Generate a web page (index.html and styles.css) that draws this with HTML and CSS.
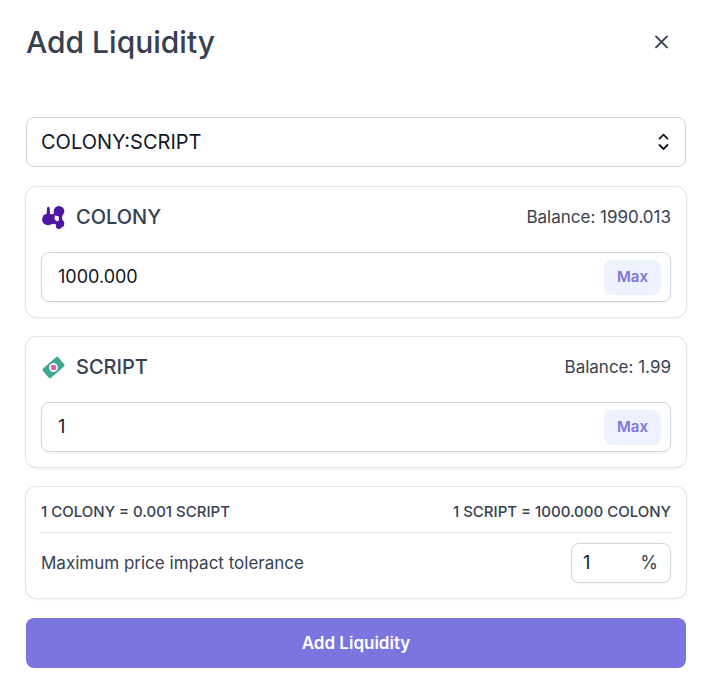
FILE: index.html
```html
<!DOCTYPE html>
<html lang="en">
<head>
    <meta charset="UTF-8">
    <meta name="viewport" content="width=device-width, initial-scale=1.0">
    <title>Add Liquidity</title>
    <link rel="stylesheet" href="styles.css">
</head>
<body>
    <form class="panel">
        <header class="panel-header">
            <h1>Add Liquidity</h1>
            <button type="button" class="close" aria-label="Close">
                <svg width="20" height="20" viewBox="0 0 20 20" fill="none" stroke="currentColor" stroke-width="1.9" stroke-linecap="round">
                    <path d="M5 4.4l11 11M16 4.4l-11 11"/>
                </svg>
            </button>
        </header>

        <div class="pair">
            <select aria-label="Token pair">
                <option>COLONY:SCRIPT</option>
            </select>
            <svg class="chevrons" width="24" height="24" viewBox="0 0 24 24" fill="none" stroke="currentColor" stroke-width="1.8" stroke-linecap="round" stroke-linejoin="round">
                <path d="M8.5 8.6l4-4 4 4M8.5 15l4 4 4-4"/>
            </svg>
        </div>

        <section class="card">
            <div class="card-header">
                <svg class="token-icon" width="25" height="25" viewBox="0 0 25 25">
                    <g fill="#4f16a0">
                        <circle cx="7" cy="14.4" r="5.9"/>
                        <circle cx="18" cy="6.2" r="5.3"/>
                        <circle cx="19.4" cy="18.6" r="3.9"/>
                        <circle cx="17.8" cy="21" r="2.9"/>
                        <path d="M5.6 10L6 3Q7.2 0 8.6 3L9.2 10Z"/>
                        <path d="M9.5 9.5Q12.5 9.6 13.4 7.6L21.6 9Q20.4 12.6 21.8 16L16 21Q14 17.8 10 19.4Z"/>
                    </g>
                    <path fill="#fff" d="M13.8 10.4L17.6 11.2 18.1 15 16 16.4 13.6 14.6Z"/>
                </svg>
                <label class="token" for="colony-amount">COLONY</label>
                <span class="balance">Balance: 1990.013</span>
            </div>
            <div class="field">
                <input type="text" id="colony-amount" value="1000.000">
                <button type="button" class="max">Max</button>
            </div>
        </section>

        <section class="card">
            <div class="card-header">
                <svg class="token-icon" width="25" height="25" viewBox="0 0 25 25">
                    <g transform="rotate(-41 12.5 12.5)">
                        <rect x="2.2" y="6.4" width="20.6" height="12.2" rx="1.8" fill="#3fa78f"/>
                        <circle cx="12.5" cy="12.5" r="4.4" fill="#fff"/>
                    </g>
                    <rect x="10" y="10" width="5" height="5" rx="1" fill="#ee54b4"/>
                </svg>
                <label class="token" for="script-amount">SCRIPT</label>
                <span class="balance">Balance: 1.99</span>
            </div>
            <div class="field">
                <input type="text" id="script-amount" value="1">
                <button type="button" class="max">Max</button>
            </div>
        </section>

        <section class="card">
            <div class="rates">
                <span>1 COLONY = 0.001 SCRIPT</span>
                <span>1 SCRIPT = 1000.000 COLONY</span>
            </div>
            <div class="tolerance">
                <label for="tolerance">Maximum price impact tolerance</label>
                <div class="field percent">
                    <input type="text" id="tolerance" value="1">
                    <span>%</span>
                </div>
            </div>
        </section>

        <button type="submit" class="submit">Add Liquidity</button>
    </form>
</body>
</html>
```
FILE: styles.css
```css
* {
    box-sizing: border-box;
}

body {
    margin: 0;
    background: #fff;
    color: #374151;
    font-family: Inter, "Liberation Sans", sans-serif;
    font-size: 18px;
    line-height: 30px;
}

input, select, button {
    font: inherit;
    color: inherit;
}

button {
    border: none;
    padding: 0;
    cursor: pointer;
}

.panel {
    display: flex;
    flex-direction: column;
    gap: 20px;
    padding: 22px 23px 27px 26px;
}

.panel-header {
    display: flex;
    align-items: center;
    justify-content: space-between;
    margin-bottom: 35px;
}

h1 {
    margin: 0;
    font-size: 30px;
    font-weight: 500;
    line-height: 40px;
}

.close {
    display: flex;
    margin-right: 15px;
    background: none;
}

/* Token pair drop-down */
.pair {
    display: grid;
    align-items: center;
    color: #111827;
}

.pair select {
    grid-area: 1 / 1;
    width: 100%;
    height: 50px;
    padding: 0 50px 0 14px;
    border: 1px solid #d1d5db;
    border-radius: 8px;
    background: #fff;
    font-size: 20px;
    appearance: none;
}

.chevrons {
    grid-area: 1 / 1;
    justify-self: end;
    margin-right: 11px;
    pointer-events: none;
}

/* Cards */
.card {
    padding: 15px;
    border-radius: 10px;
    box-shadow: 0 0 0 1px #e5e7eb, 0 1px 3px rgba(0, 0, 0, 0.1);
}

.card-header {
    display: flex;
    align-items: center;
    margin-bottom: 20px;
}

.token-icon {
    margin-right: 10px;
}

.token {
    font-size: 20px;
    font-weight: 500;
}

.balance,
.tolerance label {
    font-size: 17px;
}

.balance {
    margin-left: auto;
}

.field {
    display: flex;
    align-items: center;
    height: 50px;
    padding: 0 9px 0 16px;
    border: 1px solid #d1d5db;
    border-radius: 8px;
    box-shadow: 0 1px 2px rgba(0, 0, 0, 0.06);
}

.field input {
    flex: 1;
    min-width: 0;
    padding: 0;
    border: none;
    outline: none;
    background: none;
    color: #111827;
}

.max {
    height: 35px;
    padding: 0 13px;
    border-radius: 8px;
    background: #eef2ff;
    color: #7c75df;
    font-size: 15px;
    font-weight: 600;
}

.rates {
    display: flex;
    justify-content: space-between;
    padding-bottom: 10px;
    border-bottom: 1px solid #e5e7eb;
    font-size: 15px;
    font-weight: 500;
    line-height: 20px;
}

.tolerance {
    display: flex;
    align-items: center;
    justify-content: space-between;
    padding-top: 10px;
}

.percent {
    width: 100px;
    height: 40px;
    padding: 0 12px 0 11px;
}

.submit {
    height: 50px;
    border-radius: 8px;
    background: #7c75df;
    color: #fff;
    font-size: 17px;
    font-weight: 600;
}
```
